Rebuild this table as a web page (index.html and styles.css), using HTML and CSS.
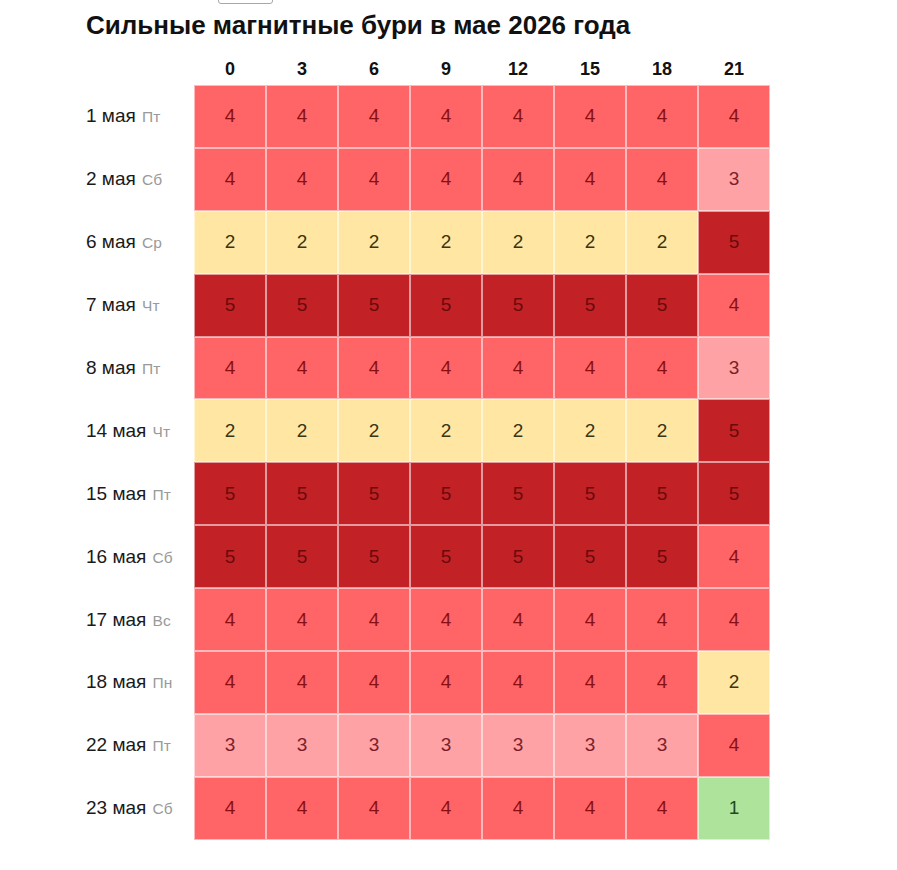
FILE: index.html
```html
<!DOCTYPE html>
<html lang="ru">
<head>
<meta charset="utf-8">
<title>Сильные магнитные бури в мае 2026 года</title>
<link rel="stylesheet" href="styles.css">
</head>
<body>
<div class="tab"></div>
<main class="page">
  <h1 class="title">Сильные магнитные бури в мае 2026 года</h1>
  <div class="grid">
    <div class="corner"></div>
    <div class="hour">0</div><div class="hour">3</div><div class="hour">6</div><div class="hour">9</div><div class="hour">12</div><div class="hour">15</div><div class="hour">18</div><div class="hour">21</div>

    <div class="day">1 мая <span class="wd">Пт</span></div>
    <div class="c k4">4</div><div class="c k4">4</div><div class="c k4">4</div><div class="c k4">4</div><div class="c k4">4</div><div class="c k4">4</div><div class="c k4">4</div><div class="c k4">4</div>

    <div class="day">2 мая <span class="wd">Сб</span></div>
    <div class="c k4">4</div><div class="c k4">4</div><div class="c k4">4</div><div class="c k4">4</div><div class="c k4">4</div><div class="c k4">4</div><div class="c k4">4</div><div class="c k3">3</div>

    <div class="day">6 мая <span class="wd">Ср</span></div>
    <div class="c k2">2</div><div class="c k2">2</div><div class="c k2">2</div><div class="c k2">2</div><div class="c k2">2</div><div class="c k2">2</div><div class="c k2">2</div><div class="c k5">5</div>

    <div class="day">7 мая <span class="wd">Чт</span></div>
    <div class="c k5">5</div><div class="c k5">5</div><div class="c k5">5</div><div class="c k5">5</div><div class="c k5">5</div><div class="c k5">5</div><div class="c k5">5</div><div class="c k4">4</div>

    <div class="day">8 мая <span class="wd">Пт</span></div>
    <div class="c k4">4</div><div class="c k4">4</div><div class="c k4">4</div><div class="c k4">4</div><div class="c k4">4</div><div class="c k4">4</div><div class="c k4">4</div><div class="c k3">3</div>

    <div class="day">14 мая <span class="wd">Чт</span></div>
    <div class="c k2">2</div><div class="c k2">2</div><div class="c k2">2</div><div class="c k2">2</div><div class="c k2">2</div><div class="c k2">2</div><div class="c k2">2</div><div class="c k5">5</div>

    <div class="day">15 мая <span class="wd">Пт</span></div>
    <div class="c k5">5</div><div class="c k5">5</div><div class="c k5">5</div><div class="c k5">5</div><div class="c k5">5</div><div class="c k5">5</div><div class="c k5">5</div><div class="c k5">5</div>

    <div class="day">16 мая <span class="wd">Сб</span></div>
    <div class="c k5">5</div><div class="c k5">5</div><div class="c k5">5</div><div class="c k5">5</div><div class="c k5">5</div><div class="c k5">5</div><div class="c k5">5</div><div class="c k4">4</div>

    <div class="day">17 мая <span class="wd">Вс</span></div>
    <div class="c k4">4</div><div class="c k4">4</div><div class="c k4">4</div><div class="c k4">4</div><div class="c k4">4</div><div class="c k4">4</div><div class="c k4">4</div><div class="c k4">4</div>

    <div class="day">18 мая <span class="wd">Пн</span></div>
    <div class="c k4">4</div><div class="c k4">4</div><div class="c k4">4</div><div class="c k4">4</div><div class="c k4">4</div><div class="c k4">4</div><div class="c k4">4</div><div class="c k2">2</div>

    <div class="day">22 мая <span class="wd">Пт</span></div>
    <div class="c k3">3</div><div class="c k3">3</div><div class="c k3">3</div><div class="c k3">3</div><div class="c k3">3</div><div class="c k3">3</div><div class="c k3">3</div><div class="c k4">4</div>

    <div class="day">23 мая <span class="wd">Сб</span></div>
    <div class="c k4">4</div><div class="c k4">4</div><div class="c k4">4</div><div class="c k4">4</div><div class="c k4">4</div><div class="c k4">4</div><div class="c k4">4</div><div class="c k1">1</div>
  </div>
</main>
</body>
</html>
```

FILE: styles.css
```css
html, body {
  margin: 0;
  padding: 0;
  background: #ffffff;
}

body {
  font-family: "Liberation Sans", Arial, sans-serif;
  color: #1a1a1a;
  position: relative;
  width: 897px;
  height: 870px;
  overflow: hidden;
}

.tab {
  position: absolute;
  left: 218px;
  top: -20px;
  width: 53px;
  height: 22px;
  border: 1px solid #a8a8a8;
  border-radius: 3px;
  background: #fff;
}

.page {
  padding: 10px 0 0 86px;
}

.title {
  margin: 0;
  font-size: 26px;
  line-height: 30px;
  font-weight: bold;
  color: #111;
}

.grid {
  margin-top: 15px;
  display: grid;
  grid-template-columns: 108px repeat(8, 72px);
  grid-template-rows: 30px repeat(12, 62.9px);
}

.hour {
  display: flex;
  align-items: center;
  justify-content: center;
  font-size: 18px;
  font-weight: bold;
  color: #111;
  padding-bottom: 2px;
}

.day {
  display: flex;
  align-items: center;
  font-size: 19px;
  color: #1a1a1a;
  white-space: pre;
}

.wd {
  font-size: 15.5px;
  color: #9a9a9a;
  margin-left: 1px;
  padding-top: 2px;
}

.c {
  display: flex;
  align-items: center;
  justify-content: center;
  font-size: 19px;
  border: 1px solid rgba(255, 255, 255, 0.55);
  box-sizing: border-box;
}

.k1 { background: #ade39b; color: #1f4a1c; }
.k2 { background: #ffe7a3; color: #3a3410; }
.k3 { background: #ffa2a5; color: #7a1f2a; }
.k4 { background: #ff6566; color: #8a0f14; }
.k5 { background: #c22226; color: #6a0a0c; }
```
